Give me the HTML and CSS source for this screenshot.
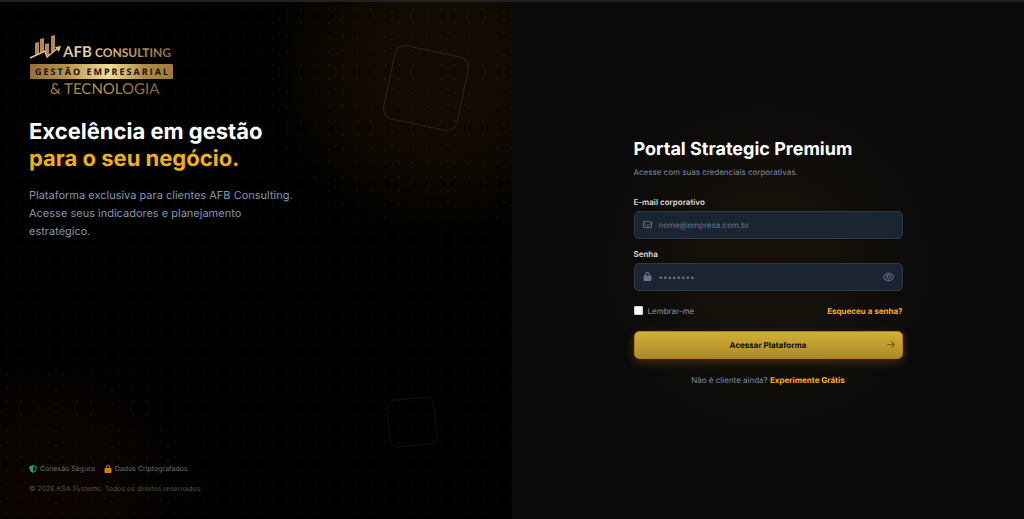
FILE: index.html
```html
<!DOCTYPE html>
<html lang="pt-BR">
<head>
    <meta charset="UTF-8">
    <meta name="viewport" content="width=device-width, initial-scale=1.0">
    <title>AFB Consulting - Login</title>
    <link rel="stylesheet" href="styles.css">
</head>
<body>
    <div class="login-page">
        <!-- Brand panel -->
        <section class="brand-panel">
            <div class="shape shape-large"></div>
            <div class="shape shape-small"></div>

            <div class="brand-top">
                <svg class="logo" viewBox="0 0 146 64" role="img" aria-label="AFB Consulting">
                    <defs>
                        <linearGradient id="gold" gradientUnits="userSpaceOnUse" x1="0" y1="0" x2="146" y2="0">
                            <stop offset="0" stop-color="#a07a3c"/>
                            <stop offset="0.35" stop-color="#ecd9a6"/>
                            <stop offset="0.65" stop-color="#c8a96a"/>
                            <stop offset="1" stop-color="#8a6430"/>
                        </linearGradient>
                        <linearGradient id="goldBar" x1="0" y1="0" x2="1" y2="0">
                            <stop offset="0" stop-color="#94703a"/>
                            <stop offset="0.25" stop-color="#b8924c"/>
                            <stop offset="0.55" stop-color="#f0dc96"/>
                            <stop offset="0.8" stop-color="#b08a46"/>
                            <stop offset="1" stop-color="#a07a3e"/>
                        </linearGradient>
                        <linearGradient id="goldDark" x1="0" y1="0" x2="1" y2="0">
                            <stop offset="0" stop-color="#a27c3e"/>
                            <stop offset="0.5" stop-color="#b39252"/>
                            <stop offset="1" stop-color="#866431"/>
                        </linearGradient>
                    </defs>
                    <g fill="#b08a4a">
                        <path d="M6 9l4-1v12l-4 2z"/>
                        <path d="M11 5l4-1v14l-4 2z"/>
                        <path d="M16 10l4-1v13l-3-1-1-4z"/>
                        <path d="M22 2l4-1v15l-4 3z"/>
                    </g>
                    <path d="M1 24l15-7 2 6 11-9" fill="none" stroke="#dcc083" stroke-width="1.5"/>
                    <path d="M26 13l6-1-2 6z" fill="#dcc083"/>
                    <text class="logo-afb" x="34" y="23" fill="url(#gold)">AFB</text>
                    <text class="logo-consulting" x="66" y="23" fill="url(#gold)">CONSULTING</text>
                    <rect x="1" y="30" width="143" height="15" rx="1" fill="url(#goldBar)"/>
                    <text class="logo-band" x="6" y="41">GESTÃO EMPRESARIAL</text>
                    <text class="logo-tec" x="21" y="60" fill="url(#goldDark)">&amp; TECNOLOGIA</text>
                </svg>

                <h1 class="headline">Excelência em gestão <span>para o seu negócio.</span></h1>
                <p class="lead">Plataforma exclusiva para clientes AFB Consulting. Acesse seus indicadores e planejamento estratégico.</p>
            </div>

            <div class="brand-footer">
                <ul class="badges">
                    <li>
                        <svg class="icon-shield" viewBox="0 0 512 512"><path d="M256 0c4.6 0 9.2 1 13.4 2.9L457.7 82.8c22 9.3 38.4 31 38.3 57.2c-.5 99.2-41.3 280.7-213.6 363.2c-16.7 8-36.1 8-52.8 0C57.3 420.7 16.5 239.2 16 140c-.1-26.2 16.3-47.9 38.3-57.2L242.7 2.9C246.8 1 251.4 0 256 0zm0 66.8V444.8C394 378 431.1 230.1 432 141.4L256 66.8l0 0z"/></svg>
                        Conexão Segura
                    </li>
                    <li>
                        <svg class="icon-lock" viewBox="0 0 448 512"><path d="M144 144v48H304V144c0-44.2-35.8-80-80-80s-80 35.8-80 80zM80 192V144C80 64.5 144.5 0 224 0s144 64.5 144 144v48h16c35.3 0 64 28.7 64 64V448c0 35.3-28.7 64-64 64H64c-35.3 0-64-28.7-64-64V256c0-35.3 28.7-64 64-64H80z"/></svg>
                        Dados Criptografados
                    </li>
                </ul>
                <p class="copyright">© 2026 KSA Systems. Todos os direitos reservados.</p>
            </div>
        </section>

        <!-- Login form -->
        <main class="form-panel">
            <form class="login-form">
                <h2>Portal Strategic Premium</h2>
                <p class="subtitle">Acesse com suas credenciais corporativas.</p>

                <label class="field-label" for="email">E-mail corporativo</label>
                <div class="field">
                    <svg class="field-icon" viewBox="0 0 512 512"><path d="M64 112c-8.8 0-16 7.2-16 16v22.1L220.5 291.7c20.7 17 50.4 17 71.1 0L464 150.1V128c0-8.8-7.2-16-16-16H64zM48 212.2V384c0 8.8 7.2 16 16 16H448c8.8 0 16-7.2 16-16V212.2L322 328.8c-38.4 31.5-93.7 31.5-132 0L48 212.2zM0 128C0 92.7 28.7 64 64 64H448c35.3 0 64 28.7 64 64V384c0 35.3-28.7 64-64 64H64c-35.3 0-64-28.7-64-64V128z"/></svg>
                    <input type="email" id="email" placeholder="nome@empresa.com.br">
                </div>

                <label class="field-label" for="password">Senha</label>
                <div class="field">
                    <svg class="field-icon" viewBox="0 0 448 512"><path d="M144 144v48H304V144c0-44.2-35.8-80-80-80s-80 35.8-80 80zM80 192V144C80 64.5 144.5 0 224 0s144 64.5 144 144v48h16c35.3 0 64 28.7 64 64V448c0 35.3-28.7 64-64 64H64c-35.3 0-64-28.7-64-64V256c0-35.3 28.7-64 64-64H80z"/></svg>
                    <input type="password" id="password" placeholder="••••••••">
                    <button type="button" class="toggle-password" aria-label="Mostrar senha">
                        <svg viewBox="0 0 576 512"><path d="M288 80c-65.2 0-118.8 29.6-159.9 67.7C89.6 183.5 63 226 49.4 256c13.6 30 40.2 72.5 78.6 108.3C169.2 402.4 222.8 432 288 432s118.8-29.6 159.9-67.7C486.4 328.5 513 286 526.6 256c-13.6-30-40.2-72.5-78.6-108.3C406.8 109.6 353.2 80 288 80zM95.4 112.6C142.5 68.8 207.2 32 288 32s145.5 36.8 192.6 80.6c46.8 43.5 78.1 95.4 93 131.1c3.3 7.9 3.3 16.7 0 24.6c-14.9 35.7-46.2 87.7-93 131.1C433.5 443.2 368.8 480 288 480s-145.5-36.8-192.6-80.6C48.6 356 17.3 304 2.5 268.3c-3.3-7.9-3.3-16.7 0-24.6C17.3 208 48.6 156 95.4 112.6zM288 336c44.2 0 80-35.8 80-80s-35.8-80-80-80c-.7 0-1.3 0-2 0c1.3 5.1 2 10.5 2 16c0 35.3-28.7 64-64 64c-5.5 0-10.9-.7-16-2c0 .7 0 1.3 0 2c0 44.2 35.8 80 80 80zm0-208a128 128 0 1 1 0 256 128 128 0 1 1 0-256z"/></svg>
                    </button>
                </div>

                <div class="options">
                    <label class="remember" for="remember">
                        <input type="checkbox" id="remember">
                        Lembrar-me
                    </label>
                    <a href="#">Esqueceu a senha?</a>
                </div>

                <button type="submit" class="submit-btn">
                    <span>Acessar Plataforma</span>
                    <svg viewBox="0 0 448 512"><path d="M438.6 278.6c12.5-12.5 12.5-32.8 0-45.3l-160-160c-12.5-12.5-32.8-12.5-45.3 0s-12.5 32.8 0 45.3L338.8 224 32 224c-17.7 0-32 14.3-32 32s14.3 32 32 32l306.7 0L233.4 393.4c-12.5 12.5-12.5 32.8 0 45.3s32.8 12.5 45.3 0l160-160z"/></svg>
                </button>

                <p class="signup">Não é cliente ainda? <a href="#">Experimente Grátis</a></p>
            </form>
        </main>
    </div>
</body>
</html>
```
FILE: styles.css
```css
* {
    box-sizing: border-box;
    margin: 0;
    padding: 0;
}
body {
    font-family: Inter, 'Liberation Sans', sans-serif;
    font-size: 8px;
    line-height: 12px;
    text-rendering: geometricPrecision;
    background-color: #0a0a0a;
    color: #fff;
}
a {
    color: #fbac18;
    font-weight: 700;
    text-decoration: none;
}
input, button {
    font-family: inherit;
    font-size: inherit;
    text-rendering: inherit;
}
.login-page {
    display: grid;
    grid-template-columns: 1fr 1fr;
    min-height: 100vh;
    border-top: 2px solid #212121;
}

/* Brand panel */
.brand-panel {
    position: relative;
    overflow: hidden;
    display: flex;
    flex-direction: column;
    justify-content: space-between;
    padding: 32px 29px 24px;
    background:
        radial-gradient(circle at 7px 7px, rgba(255, 255, 255, 0.04) 1px, transparent 1px) 0 0 / 14px 14px,
        radial-gradient(circle at 86% 12%, #140c02 0, #110a01 80px, transparent 180px),
        radial-gradient(circle at 10% 94%, #0d0401 0, #090401 60px, transparent 150px),
        #000;
}
.shape {
    position: absolute;
    border: 1px solid #38230a;
}
.shape-large {
    top: 48px;
    right: 48px;
    width: 76px;
    height: 76px;
    border-radius: 11px;
    transform: rotate(12deg);
}
.shape-small {
    bottom: 73px;
    right: 76px;
    width: 48px;
    height: 48px;
    border-radius: 8px;
    border-color: #1a1006;
    transform: rotate(-6deg);
}
.logo {
    display: block;
    width: 146px;
    height: 64px;
    margin-bottom: 21px;
}
.logo-afb, .logo-consulting, .logo-tec {
    font-family: Lato, sans-serif;
}
.logo-afb {
    font-size: 15px;
    font-weight: 700;
}
.logo-consulting {
    font-size: 12px;
    font-weight: 700;
}
.logo-band {
    font-family: 'Open Sans', sans-serif;
    font-size: 9px;
    font-weight: 700;
    letter-spacing: 2px;
    fill: #17120a;
}
.logo-tec {
    font-size: 15px;
}
.headline {
    font-size: 22px;
    line-height: 27px;
    font-weight: 700;
}
.headline span {
    display: block;
    color: #eeb013;
}
.lead {
    max-width: 269px;
    margin-top: 13px;
    font-size: 11px;
    line-height: 18px;
    color: #8496af;
}
.badges {
    display: flex;
    gap: 9px;
    list-style: none;
    font-size: 7px;
    color: #6e6e6e;
}
.badges li {
    display: flex;
    align-items: center;
    gap: 3px;
}
.badges svg {
    width: 8px;
    height: 8px;
}
.icon-shield {
    fill: #1d9e72;
}
.icon-lock {
    fill: #d97a0c;
}
.copyright {
    margin-top: 8px;
    font-size: 7px;
    color: #505050;
}

/* Login form */
.form-panel {
    display: flex;
    align-items: center;
    justify-content: center;
    padding: 26px 24px 24px;
    background: radial-gradient(circle at 50% 51%, #17110a 0, #14100a 70px, #0a0a0a 180px);
}
.login-form {
    width: 100%;
    max-width: 269px;
}
.login-form h2 {
    font-size: 18px;
    line-height: 24px;
    font-weight: 700;
}
.subtitle {
    margin: 4px 0 18px;
    color: #7b8ca5;
}
.field-label {
    display: block;
    margin-bottom: 3px;
    font-weight: 600;
    color: #dcdcdc;
}
.field {
    display: flex;
    align-items: center;
    height: 28px;
    margin-bottom: 9px;
    padding: 0 8px;
    border: 1px solid #2b394d;
    border-radius: 5px;
    background-color: #1b2431;
}
.field-icon {
    flex: none;
    width: 9px;
    height: 9px;
    fill: #64748b;
}
.field input {
    flex: 1;
    min-width: 0;
    margin-left: 7px;
    border: none;
    outline: none;
    background: none;
    color: #fff;
}
.field input::placeholder {
    color: #64748b;
}
.toggle-password {
    display: flex;
    border: none;
    background: none;
    cursor: pointer;
}
.toggle-password svg {
    width: 11px;
    height: 10px;
    fill: #64748b;
}
.options {
    display: flex;
    align-items: center;
    justify-content: space-between;
    margin: 14px 0;
}
.remember {
    display: flex;
    align-items: center;
    gap: 5px;
    color: #8a94a1;
}
.remember input {
    appearance: none;
    width: 9px;
    height: 9px;
    border: 1px solid #cfcfcf;
    border-radius: 1px;
    background-color: #fff;
}
.submit-btn {
    display: grid;
    grid-template-columns: 1fr auto 1fr;
    align-items: center;
    width: 100%;
    height: 28px;
    padding: 0 7px;
    border: 1px solid #b47a14;
    border-radius: 5px;
    background: linear-gradient(#d4af37, #aa8a2a);
    box-shadow: 0 3px 10px rgba(212, 160, 30, 0.25);
    color: #0a0a0a;
    font-weight: 700;
    cursor: pointer;
}
.submit-btn span {
    grid-column: 2;
}
.submit-btn svg {
    justify-self: end;
    width: 8px;
    height: 9px;
    fill: #9a4c0c;
}
.signup {
    margin-top: 15px;
    text-align: center;
    color: #7b8ca5;
}
```
